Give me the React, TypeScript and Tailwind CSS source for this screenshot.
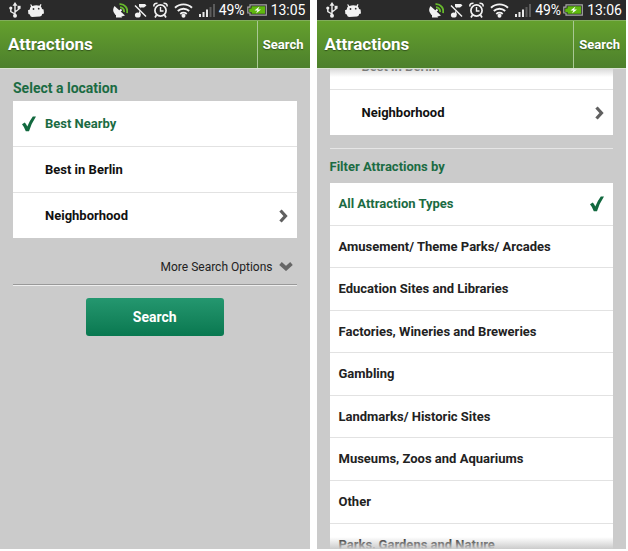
import type { ReactNode } from 'react'
import clsx from 'clsx'

const attractionTypes = [
  'All Attraction Types',
  'Amusement/ Theme Parks/ Arcades',
  'Education Sites and Libraries',
  'Factories, Wineries and Breweries',
  'Gambling',
  'Landmarks/ Historic Sites',
  'Museums, Zoos and Aquariums',
  'Other',
  'Parks, Gardens and Nature',
]

const UsbIcon = () => (
  <svg width="12" height="16" viewBox="0 0 12 16" fill="none" stroke="#eee">
    <path d="M6 3v10M6 12 1.800 9.500V6M6 10l4-3V5" strokeWidth="1.400" />
    <path d="M6 0 8.500 3.800h-5Z" fill="#eee" stroke="none" />
    <circle cx="6" cy="13.800" r="2" fill="#eee" stroke="none" />
    <circle cx="1.800" cy="6" r="1.600" fill="#eee" stroke="none" />
    <path d="M8.600 3.800h3v3h-3z" fill="#eee" stroke="none" />
  </svg>
)

const AndroidIcon = () => (
  <svg width="16" height="13" viewBox="0 0 16 13" fill="#f2f2f2">
    <path d="M3 2.500 2.200.6 3.200.2l1.100 1.700Q8 .8 11.500 1.700L12.500 0l1 .5-.7 1.900Q14 3.600 14 5l1.600.4.4 4-1.800.6Q14 12.300 12 12.600L4 13Q2 12.800 1.900 10.600L.4 10 0 6.200l1.800-.6Q1.800 3.600 3 2.500Z" />
    <circle cx="5.500" cy="5" r=".9" fill="#333" />
    <circle cx="10.700" cy="4.700" r=".9" fill="#333" />
  </svg>
)

const SatelliteIcon = () => (
  <svg width="15" height="15" viewBox="0 0 15 15" fill="none">
    <path d="M1.500 3Q-1.500 7.500 2 11.300T12 12.500Z" fill="#f2f2f2" />
    <path d="M3 11v3.500h6L8 12" fill="#f2f2f2" />
    <path d="m6 9 2.500-2.500" stroke="#f2f2f2" strokeWidth="1.800" />
    <path
      d="M7 4.300a4 4 0 0 1 4 4.700M6.500 1.200a7 7 0 0 1 7.500 8.800"
      stroke="#67b82d"
      strokeWidth="1.900"
    />
  </svg>
)

const MutedNoteIcon = () => (
  <svg width="13" height="15" viewBox="0 0 13 15" fill="none">
    <path d="M5 1h6l1.500 1.500-2.500 2H6.500V12H5Z" fill="#f2f2f2" />
    <path d="M2 2.500 12 13" stroke="#2a2a2a" strokeWidth="3" />
    <ellipse cx="3.800" cy="12" rx="2.900" ry="2.600" fill="#f2f2f2" />
    <path d="m1 2.500 11 11" stroke="#f2f2f2" strokeWidth="1.400" />
  </svg>
)

const AlarmIcon = () => (
  <svg width="15" height="16" viewBox="0 0 15 16" fill="none" stroke="#f2f2f2">
    <circle cx="7.500" cy="8.500" r="5.600" strokeWidth="1.700" />
    <path d="M7.500 5v4h3" strokeWidth="1.400" />
    <path d="M.8 4.500Q.8 1 4.500 1.200M14.200 4.500Q14.200 1 10.500 1.200" strokeWidth="1.600" />
    <path d="m3.500 13-1.500 2.500M11.500 13l1.500 2.500" strokeWidth="1.700" />
  </svg>
)

const WifiIcon = () => (
  <svg width="19" height="16" viewBox="0 0 19 16" fill="none" stroke="#f2f2f2">
    <path
      d="M1 5.800a12.200 12.200 0 0 1 17 0M3.800 9a8.200 8.200 0 0 1 11.400 0M6.300 12a4.800 4.800 0 0 1 6.400 0"
      strokeWidth="1.900"
    />
    <circle cx="9.500" cy="13.700" r="2" fill="#f2f2f2" stroke="none" />
  </svg>
)

const SignalIcon = () => (
  <svg width="16" height="13" viewBox="0 0 16 13" fill="#e8e8e8">
    <path d="M0 10h2v3H0zM3.500 8h2v5h-2zM7 5.500h2V13H7z" />
    <path d="M10.500 3h2v10h-2zM14 0h2v13h-2z" fill="#5c5c5c" />
  </svg>
)

const BatteryIcon = () => (
  <svg width="20" height="12" viewBox="0 0 20 12">
    <path
      d="M3 .8h16.300v10.400H3V9H.8V3.200H3Z"
      fill="#222"
      stroke="#a8a8a8"
      strokeWidth="1.200"
    />
    <path d="M4.500 2.200H18v7.600H4.500V8H2.200V4.500h2.300Z" fill="#5fb80e" />
    <path d="M12.500 2.500 7.500 6.500h3L9 9.500l5-4h-3Z" fill="#fff" />
  </svg>
)

const CheckIcon = () => (
  <svg width="14" height="16" viewBox="0 0 14 16" fill="#12693f">
    <path d="M0 8.200 2.800 6.600Q4.200 8.200 5.300 10.500 7.500 5 10.800.6L14 .4Q9.500 7 7 15.200H3.800Q2.400 11 0 8.200Z" />
  </svg>
)

const ChevronRight = () => (
  <svg width="9" height="14" viewBox="0 0 9 14" fill="none">
    <path d="m1.500 1.500 5 5.500-5 5.500" stroke="#606060" strokeWidth="3.200" />
  </svg>
)

const ChevronDown = () => (
  <svg width="14" height="9" viewBox="0 0 14 9" fill="none">
    <path d="M1.500 1.500 7 6.500l5.500-5" stroke="#666" strokeWidth="3.800" />
  </svg>
)

const StatusBar = ({ time }: { time: string }) => (
  <div className="flex h-5 shrink-0 items-center bg-[#2a2a2a] pr-1 pl-[9px] text-white">
    <div className="flex flex-1 items-center gap-[7px]">
      <UsbIcon />
      <AndroidIcon />
    </div>
    <div className="flex items-center gap-[6px]">
      <SatelliteIcon />
      <MutedNoteIcon />
      <AlarmIcon />
      <WifiIcon />
      <SignalIcon />
    </div>
    <span className="ml-1 text-[14px] leading-5">49%</span>
    <span className="mr-1 ml-[2px]">
      <BatteryIcon />
    </span>
    <span className="text-[14px] leading-5">{time}</span>
  </div>
)

const Phone = ({ time, children }: { time: string; children: ReactNode }) => (
  <section className="flex min-w-0 flex-1 flex-col overflow-hidden bg-[#cbcbcb]">
    <StatusBar time={time} />
    <header className="flex h-[49px] shrink-0 items-stretch border-t border-b border-t-[#82ad5c] border-b-[#d9e2d3] bg-linear-to-b from-[#64a02d] to-[#4d802c] text-white">
      <h1 className="flex flex-1 items-center pl-2 text-[17px] font-bold [text-shadow:0_1px_1px_#33551d]">
        Attractions
      </h1>
      <button className="border-l border-[#a9c894] pr-[6px] pl-[5px] text-[13px] font-bold [text-shadow:0_1px_1px_#33551d]">
        Search
      </button>
    </header>
    {children}
  </section>
)

type LocationRowProps = {
  label: string
  selected?: boolean
  more?: boolean
}

const LocationRow = ({ label, selected, more }: LocationRowProps) => (
  <button
    className={clsx(
      'flex w-full shrink-0 items-center pr-[9px] pl-[9px] text-left text-[13px] font-bold',
      more ? 'h-[45px]' : 'h-[46px] border-b border-[#e2e2e2]',
      selected ? 'text-[#1b6b43]' : 'text-[#111]',
    )}
  >
    <span className="w-[23px]">{selected && <CheckIcon />}</span>
    <span className="flex-1">{label}</span>
    {more && <ChevronRight />}
  </button>
)

const SearchScreen = () => (
  <Phone time="13:05">
    <main className="flex flex-col px-[13px] pt-2">
      <h2 className="h-6 text-[14px] leading-[22px] font-bold text-[#1b6b43]">
        Select a location
      </h2>
      <div className="bg-white">
        <LocationRow label="Best Nearby" selected />
        <LocationRow label="Best in Berlin" />
        <LocationRow label="Neighborhood" more />
      </div>
      <button className="flex h-[47px] items-end justify-end gap-[6px] border-b border-[#999] pr-1 pb-[7px] text-[12px] leading-5 text-[#222]">
        More Search Options
        <span className="pb-[6px]">
          <ChevronDown />
        </span>
      </button>
      <div className="border-t border-[#eee]" />
      <button className="mx-auto mt-3 h-[38px] w-[138px] rounded-[3px] bg-linear-to-b from-[#24976f] to-[#087850] text-[14px] font-bold text-white">
        Search
      </button>
    </main>
  </Phone>
)

const FilterScreen = () => (
  <Phone time="13:06">
    <main className="relative flex min-h-0 flex-1 flex-col overflow-hidden px-[13px]">
      <div className="shrink-0 bg-white">
        <div className="flex h-[21px] flex-col justify-end overflow-hidden">
          <LocationRow label="Best in Berlin" />
        </div>
        <LocationRow label="Neighborhood" more />
      </div>
      <div className="mt-[13px] shrink-0 border-t border-[#e6e6e6]" />
      <h2 className="h-[34px] shrink-0 text-[13px] leading-9 font-bold text-[#1b6b43]">
        Filter Attractions by
      </h2>
      <ul className="flex h-[383px] shrink-0 flex-col bg-white">
        {attractionTypes.map((type, index) => (
          <li key={type} className="flex-1 border-b border-[#e2e2e2]">
            <button
              className={clsx(
                'flex h-full w-full items-center justify-between px-[9px] text-left text-[13px] font-bold',
                index === 0 ? 'text-[#1b6b43]' : 'text-[#222]',
              )}
            >
              {type}
              {index === 0 && <CheckIcon />}
            </button>
          </li>
        ))}
      </ul>
      {/* fading edges of the scroll area */}
      <div className="pointer-events-none absolute inset-x-0 top-0 h-2 bg-linear-to-b from-[#cbcbcb]/70 to-transparent" />
      <div className="pointer-events-none absolute inset-x-0 bottom-0 h-3 bg-linear-to-t from-[#cbcbcb] to-transparent" />
    </main>
  </Phone>
)

export default function App() {
  return (
    <div className="flex h-screen gap-[7px] bg-white pr-[2px] pb-[2px] font-[Roboto,sans-serif]">
      <SearchScreen />
      <FilterScreen />
    </div>
  )
}
